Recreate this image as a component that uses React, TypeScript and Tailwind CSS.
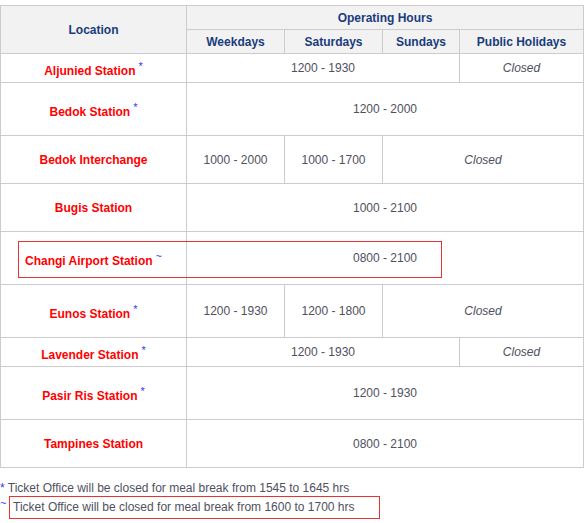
import React from 'react';

type Cell = { text: string; span?: number; closed?: boolean };
type Row = { name: string; mark?: '*' | '~'; h: string; cells: Cell[] };

const rows: Row[] = [
  { name: 'Aljunied Station', mark: '*', h: 'h-[29px]', cells: [{ text: '1200 - 1930', span: 3 }, { text: 'Closed', closed: true }] },
  { name: 'Bedok Station', mark: '*', h: 'h-[53px]', cells: [{ text: '1200 - 2000', span: 4 }] },
  { name: 'Bedok Interchange', h: 'h-[48px]', cells: [{ text: '1000 - 2000' }, { text: '1000 - 1700' }, { text: 'Closed', span: 2, closed: true }] },
  { name: 'Bugis Station', h: 'h-[48px]', cells: [{ text: '1000 - 2100', span: 4 }] },
  { name: 'Changi Airport Station', mark: '~', h: 'h-[53px]', cells: [{ text: '0800 - 2100', span: 4 }] },
  { name: 'Eunos Station', mark: '*', h: 'h-[53px]', cells: [{ text: '1200 - 1930' }, { text: '1200 - 1800' }, { text: 'Closed', span: 2, closed: true }] },
  { name: 'Lavender Station', mark: '*', h: 'h-[29px]', cells: [{ text: '1200 - 1930', span: 3 }, { text: 'Closed', closed: true }] },
  { name: 'Pasir Ris Station', mark: '*', h: 'h-[53px]', cells: [{ text: '1200 - 1930', span: 4 }] },
  { name: 'Tampines Station', h: 'h-[48px]', cells: [{ text: '0800 - 2100', span: 4 }] },
];

const td = 'border border-[#cccccc] text-center align-middle p-0';
const th = 'border border-[#cccccc] bg-[#f2f2f2] text-center align-middle p-0 font-bold text-[#1a3c7c]';

export default function App() {
  return (
    <div className="relative w-[587px] h-[523px] pt-[5px] bg-white text-[12px] leading-[14px] text-[#505060] font-['Liberation_Sans',Arial,sans-serif]">
      <table className="table-fixed w-[584px]">
        <colgroup>
          <col className="w-[186px]" />
          <col className="w-[98px]" />
          <col className="w-[98px]" />
          <col className="w-[77px]" />
          <col className="w-[124px]" />
        </colgroup>
        <thead>
          <tr className="h-[24px]">
            <th rowSpan={2} className={th}>Location</th>
            <th colSpan={4} className={th}>Operating Hours</th>
          </tr>
          <tr className="h-[24px]">
            <th className={th}>Weekdays</th>
            <th className={th}>Saturdays</th>
            <th className={th}>Sundays</th>
            <th className={th}>Public Holidays</th>
          </tr>
        </thead>
        <tbody>
          {rows.map((r) => (
            <tr key={r.name} className={r.h}>
              <td className={`${td} font-bold text-[#ff0000]`}>
                {r.name}
                {r.mark && (
                  <sup className="top-0 align-super leading-[14px] ml-[3px] font-normal text-[11px] text-[#3333ff]">
                    {r.mark}
                  </sup>
                )}
              </td>
              {r.cells.map((c, i) => (
                <td key={i} colSpan={c.span} className={`${td} ${c.closed ? 'italic' : ''}`}>
                  {c.text}
                </td>
              ))}
            </tr>
          ))}
        </tbody>
      </table>

      {/* highlight around the Changi row */}
      <div className="absolute left-[18px] top-[241px] w-[424px] h-[37px] border border-[#e83333] pointer-events-none" />

      <div className="mt-[13px] leading-[15px]">
        <div>
          <span className="text-[#3333ff]">*</span> Ticket Office will be closed for meal break from 1545 to 1645 hrs
        </div>
        <div className="flex items-start">
          <span className="w-[9px] mt-[2px] text-[11px] leading-[11px] text-[#3333ff]">~</span>
          <div className="w-[371px] border border-[#e83333] pl-[3px] py-[3px]">
            Ticket Office will be closed for meal break from 1600 to 1700 hrs
          </div>
        </div>
      </div>
    </div>
  );
}
